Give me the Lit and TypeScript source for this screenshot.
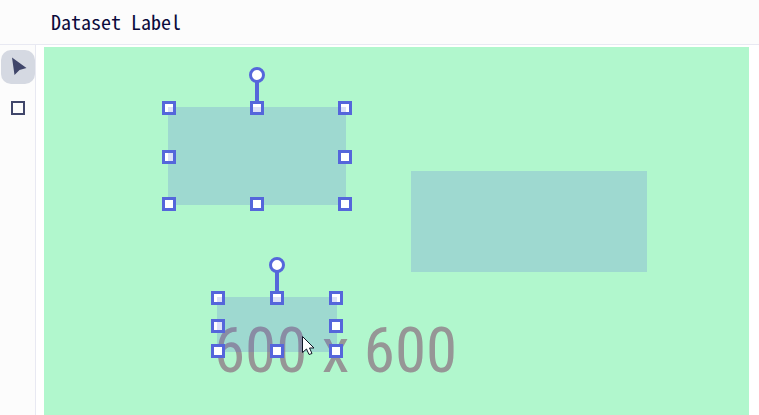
import { LitElement, html, css, svg } from "lit";
import { customElement, state } from "lit/decorators.js";

interface Region {
  x: number;
  y: number;
  width: number;
  height: number;
  selected: boolean;
}

const HANDLE = 11;

@customElement("annotation-canvas")
class AnnotationCanvas extends LitElement {
  static styles = css`
    :host {
      display: block;
      background: #b1f7cd;
      overflow: hidden;
    }
    .surface {
      display: block;
      width: 100%;
      height: 100%;
    }
    .caption {
      font-family: "Roboto Condensed", "Open Sans Condensed", "Noto Sans ExtraCondensed", "Noto Sans Condensed",
        "Liberation Sans", sans-serif;
      font-size: 63px;
      fill: #969696;
    }
    .region,
    .tint {
      fill: #5566db;
      fill-opacity: 0.2;
    }
    .handle {
      fill: #fff;
      stroke: #5566db;
      stroke-width: 3;
    }
    .stem {
      stroke: #5566db;
      stroke-width: 4;
    }
    .pointer {
      fill: #fff;
      stroke: #111827;
      stroke-width: 1;
    }
  `;

  @state() private regions: Region[] = [
    { x: 124, y: 60, width: 178, height: 98, selected: true },
    { x: 367, y: 124, width: 236, height: 101, selected: false },
    { x: 173, y: 250, width: 120, height: 55, selected: true },
  ];

  private handle(x: number, y: number) {
    return svg`<rect class="handle" x=${x - HANDLE / 2} y=${y - HANDLE / 2} width=${HANDLE} height=${HANDLE} />`;
  }

  private selection(r: Region) {
    const left = r.x + 1;
    const right = r.x + r.width - 1;
    const centre = r.x + r.width / 2;
    const top = r.y + 1;
    const bottom = r.y + r.height - 1;
    const middle = r.y + Math.ceil(r.height / 2) + 1;
    return svg`
      <line class="stem" x1=${centre} x2=${centre} y1=${top - 26} y2=${top - 7} />
      <circle class="handle" cx=${centre} cy=${top - 33} r="6.5" />
      ${[left, centre, right].map((x) => this.handle(x, top))}
      ${[left, right].map((x) => this.handle(x, middle))}
      ${[left, centre, right].map((x) => this.handle(x, bottom))}
      <rect class="tint" x=${r.x} y=${r.y} width="5" height="5" />
      <rect class="tint" x=${centre - 4} y=${r.y} width="8" height="5" />
      <rect class="tint" x=${right - 4} y=${r.y} width="5" height="5" />
      <rect class="tint" x=${r.x} y=${middle - 4} width="5" height="8" />
    `;
  }

  render() {
    return html`
      <svg class="surface" role="group" aria-label="Annotations">
        <text class="caption" x="170" y="325">600 x 600</text>
        ${this.regions.map(
          (r) => svg`<rect class="region" x=${r.x} y=${r.y} width=${r.width} height=${r.height} />`
        )}
        ${this.regions.filter((r) => r.selected).map((r) => this.selection(r))}
        <path
          class="pointer"
          d="M258.500 289.500V305.500L262.500 302L265 307.500L268 306.500L265.500 301H270Z"
        />
      </svg>
    `;
  }
}

@customElement("app-root")
class AppRoot extends LitElement {
  static styles = css`
    :host {
      display: flex;
      flex-direction: column;
      min-height: 100vh;
      background: #fff;
      font-family: "Noto Sans Mono CJK JP", "Liberation Mono", monospace;
    }
    .header {
      display: flex;
      align-items: center;
      height: 44px;
      padding: 0 51px;
      background: #fcfcfc;
      border-bottom: 1px solid #e8e9f2;
    }
    .title {
      margin: 0;
      font-size: 20px;
      font-weight: 400;
      line-height: 24px;
      color: #0b0b3b;
    }
    .body {
      display: flex;
      flex: 1;
    }
    .tools {
      display: flex;
      flex-direction: column;
      gap: 7px;
      padding: 5px 0 0 1px;
      background: #fcfcfc;
      border-right: 1px solid #e8e9f2;
    }
    .tool {
      display: grid;
      place-items: center;
      width: 34px;
      height: 34px;
      padding: 0;
      border: 0;
      border-radius: 10px;
      background: none;
    }
    .tool.active {
      background: #d5d9e2;
    }
    .icon {
      width: 20px;
      height: 20px;
    }
    .solid {
      fill: #40466a;
    }
    .outline {
      fill: none;
      stroke: #40466a;
      stroke-width: 2;
    }
    .canvas {
      flex: 1;
      margin: 2px 10px 0 8px;
    }
  `;

  @state() private tool = "select";

  private button(name: string, icon: unknown) {
    return html`<button
      class="tool ${this.tool === name ? "active" : ""}"
      aria-label=${name}
      aria-pressed=${this.tool === name}
      @click=${() => (this.tool = name)}
    >
      <svg class="icon" viewBox="0 0 20 20" aria-hidden="true">${icon}</svg>
    </button>`;
  }

  render() {
    return html`
      <header class="header"><h1 class="title">Dataset Label</h1></header>
      <main class="body">
        <nav class="tools" aria-label="Tools">
          ${this.button("select", svg`<path class="solid" d="M4 0.500L18.500 11L11.500 13L6.500 18Z" />`)}
          ${this.button("rectangle", svg`<rect class="outline" x="4" y="4" width="12" height="12" />`)}
        </nav>
        <annotation-canvas class="canvas"></annotation-canvas>
      </main>
    `;
  }
}
